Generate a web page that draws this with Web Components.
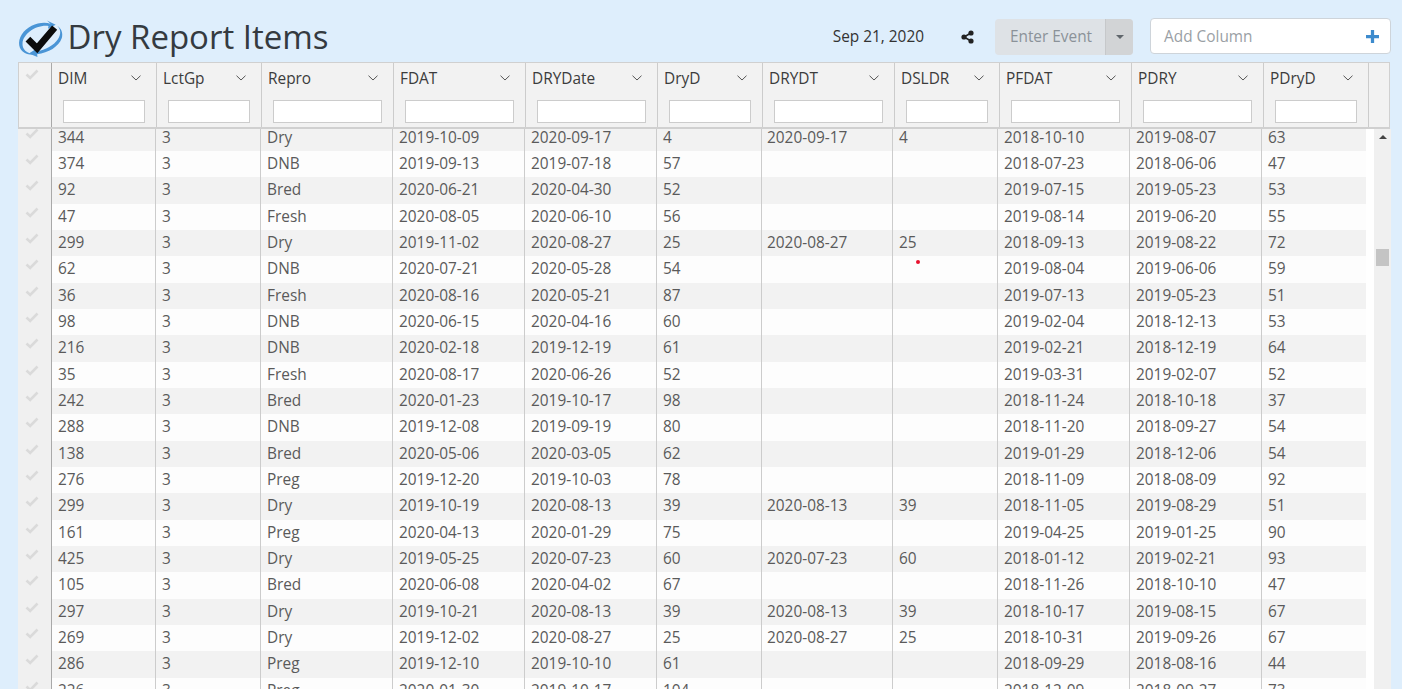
<!DOCTYPE html>
<html lang="en">
<head>
<meta charset="utf-8">
<title>Dry Report Items</title>
<style>
  html, body { margin: 0; height: 100%; overflow: hidden; }
  body { background: #deeefc; font-family: "Open Sans", "Liberation Sans", sans-serif; }
</style>
</head>
<body>
<report-page>
  <report-header slot="header"></report-header>
  <report-grid slot="grid"></report-grid>
</report-page>

<script>
const COLUMNS = [
  { name: 'DIM', head: 105, body: 104, pad: 6 },
  { name: 'LctGp', head: 105, body: 105, pad: 6 },
  { name: 'Repro', head: 132, body: 132, pad: 6 },
  { name: 'FDAT', head: 132, body: 132, pad: 6 },
  { name: 'DRYDate', head: 132, body: 132, pad: 6 },
  { name: 'DryD', head: 105, body: 105, pad: 6 },
  { name: 'DRYDT', head: 132, body: 131, pad: 5 },
  { name: 'DSLDR', head: 105, body: 105, pad: 6 },
  { name: 'PFDAT', head: 132, body: 132, pad: 6 },
  { name: 'PDRY', head: 132, body: 132, pad: 6 },
  { name: 'PDryD', head: 105, body: 104, pad: 6 }
];

const ROWS = [
  '344|3|Dry|2019-10-09|2020-09-17|4|2020-09-17|4|2018-10-10|2019-08-07|63',
  '374|3|DNB|2019-09-13|2019-07-18|57|||2018-07-23|2018-06-06|47',
  '92|3|Bred|2020-06-21|2020-04-30|52|||2019-07-15|2019-05-23|53',
  '47|3|Fresh|2020-08-05|2020-06-10|56|||2019-08-14|2019-06-20|55',
  '299|3|Dry|2019-11-02|2020-08-27|25|2020-08-27|25|2018-09-13|2019-08-22|72',
  '62|3|DNB|2020-07-21|2020-05-28|54|||2019-08-04|2019-06-06|59',
  '36|3|Fresh|2020-08-16|2020-05-21|87|||2019-07-13|2019-05-23|51',
  '98|3|DNB|2020-06-15|2020-04-16|60|||2019-02-04|2018-12-13|53',
  '216|3|DNB|2020-02-18|2019-12-19|61|||2019-02-21|2018-12-19|64',
  '35|3|Fresh|2020-08-17|2020-06-26|52|||2019-03-31|2019-02-07|52',
  '242|3|Bred|2020-01-23|2019-10-17|98|||2018-11-24|2018-10-18|37',
  '288|3|DNB|2019-12-08|2019-09-19|80|||2018-11-20|2018-09-27|54',
  '138|3|Bred|2020-05-06|2020-03-05|62|||2019-01-29|2018-12-06|54',
  '276|3|Preg|2019-12-20|2019-10-03|78|||2018-11-09|2018-08-09|92',
  '299|3|Dry|2019-10-19|2020-08-13|39|2020-08-13|39|2018-11-05|2019-08-29|51',
  '161|3|Preg|2020-04-13|2020-01-29|75|||2019-04-25|2019-01-25|90',
  '425|3|Dry|2019-05-25|2020-07-23|60|2020-07-23|60|2018-01-12|2019-02-21|93',
  '105|3|Bred|2020-06-08|2020-04-02|67|||2018-11-26|2018-10-10|47',
  '297|3|Dry|2019-10-21|2020-08-13|39|2020-08-13|39|2018-10-17|2019-08-15|67',
  '269|3|Dry|2019-12-02|2020-08-27|25|2020-08-27|25|2018-10-31|2019-09-26|67',
  '286|3|Preg|2019-12-10|2019-10-10|61|||2018-09-29|2018-08-16|44',
  '226|3|Preg|2020-01-30|2019-10-17|104|||2018-12-09|2018-09-27|73'
];

const CHECK = '<svg width="14" height="11" viewBox="0 0 14 11" style="display:block"><path d="M1.5 5.5 5.2 9 12.5 1.5" fill="none" stroke="#dadada" stroke-width="2.6"/></svg>';

class ReportPage extends HTMLElement {
  constructor() {
    super();
    this.attachShadow({ mode: 'open' });
    this.shadowRoot.innerHTML = `
      <style>
        :host { display: flex; flex-direction: column; height: 689px; padding: 0 11px 0 18px; box-sizing: border-box; overflow: hidden; }
      </style>
      <slot name="header"></slot>
      <slot name="grid"></slot>
    `;
  }
}

class ReportHeader extends HTMLElement {
  constructor() {
    super();
    this.attachShadow({ mode: 'open' });
    this.shadowRoot.innerHTML = `
      <style>
        :host { display: flex; align-items: center; height: 62px; flex: none; color: #333; }
        .logo { flex: none; margin: 14px 3.500px 0 -1px; }
        h1 { margin: 12px 0 0; font-size: 33px; font-weight: 400; line-height: 46px; color: #343a40; white-space: nowrap; }
        .date { margin: 11px 0 0 auto; font-size: 15.4px; line-height: 20px; }
        .share { margin: 11px 21px 0 37px; display: block; }
        .event { display: flex; width: 138px; height: 36px; margin-top: 11px; border-radius: 4px; overflow: hidden; background: #dee2e6; font-size: 15.4px; color: #8b9299; }
        .event span { flex: 1; text-align: center; line-height: 35px; padding-left: 2px; }
        .event i { flex: none; width: 27px; background: #d2d4d6; border-left: 1px solid #c6c8ca; display: flex; align-items: center; justify-content: center; }
        .event i::after { content: ""; border: 4px solid transparent; border-top-color: #60666c; border-bottom: 0; }
        .add { display: flex; align-items: center; width: 241px; height: 36px; margin: 10px 0 0 17px; box-sizing: border-box; background: #fff; border: 1px solid #ced4da; border-radius: 4px; padding: 0 11px 0 13px; font-size: 15.4px; color: #9a9fa5; }
        .add span { flex: 1; }
      </style>
      <svg class="logo" width="47" height="37" viewBox="1.5 1 43.500 36">
        <path d="M33 4.600C24 1.500 11 6 5 15 .5 22 2 30 8 33c3 1.400 6 1.700 9 1.300C10 33.500 5 30 5.800 23 6.800 15 18 5.500 31 6.800l-.5 2.700L38 5.500 29.500 1.500z" fill="#4a95d6"/>
        <path d="M39.500 6.500c3.500 3 4 8 .8 13-4 6-12 11-21 12l-.5-2.300-6.800 4.300 8.300 3.500-.4-2.700C31 33 41 27 44 18.500c1.500-5-.8-9.800-4.500-12z" fill="#4a95d6"/>
        <path d="M11 19.500 20 28.500 37 8.500" fill="none" stroke="#0c0c0c" stroke-width="6.500" stroke-linejoin="miter"/>
      </svg>
      <h1>Dry Report Items</h1>
      <div class="date">Sep 21, 2020</div>
      <svg class="share" width="13" height="14" viewBox="0 0 13 14">
        <path d="M3 7 10 3M3 7l7 4" stroke="#222" stroke-width="1.500" fill="none"/>
        <circle cx="3" cy="7" r="2.600" fill="#222"/><circle cx="10" cy="3" r="2.600" fill="#222"/><circle cx="10" cy="11" r="2.600" fill="#222"/>
      </svg>
      <div class="event"><span>Enter Event</span><i></i></div>
      <div class="add">
        <span>Add Column</span>
        <svg width="13" height="13" viewBox="0 0 12 12"><path d="M6 0v12M0 6h12" stroke="#3d8bcd" stroke-width="3"/></svg>
      </div>
    `;
  }
}

class GridHead extends HTMLElement {
  constructor() {
    super();
    this.attachShadow({ mode: 'open' });
    const cells = COLUMNS.map(c => `
      <div class="cell">
        <div class="title"><span>${c.name}</span>
          <svg width="10" height="6" viewBox="0 0 10 6"><path d="M.5.7 5 5 9.500.7" fill="none" stroke="#555" stroke-width="1"/></svg>
        </div>
        <input type="text" aria-label="Filter ${c.name}">
      </div>`).join('');
    this.shadowRoot.innerHTML = `
      <style>
        :host { display: grid; grid-template-columns: 33px ${COLUMNS.map(c => c.head + 'px').join(' ')} 1fr; height: 67px; flex: none; box-sizing: border-box; background: #f2f2f2; border: 1px solid #d0d0d0; border-bottom-width: 2px; margin-right: 1px; color: #3c3c3c; font-size: 15.4px; }
        .tick { border-right: 1px solid #a9a9a9; padding: 6px 0 0 6px; box-sizing: border-box; }
        .cell { border-right: 1px solid #ccc; box-sizing: border-box; padding: 0 11px 0 6px; display: flex; flex-direction: column; min-width: 0; }
        .title { display: flex; align-items: center; justify-content: space-between; height: 30px; padding-right: 4px; }
        input { display: block; box-sizing: border-box; width: auto; height: 23px; margin: 7px 0 0 5px; padding: 0; border: 1px solid #ccc; background: #fff; outline: 0; min-width: 0; }
      </style>
      <div class="tick">${CHECK}</div>${cells}<div></div>
    `;
  }
}

class GridRow extends HTMLElement {
  constructor() {
    super();
    this.attachShadow({ mode: 'open' });
  }

  connectedCallback() {
    const values = this.getAttribute('values').split('|');
    const cells = values.map((v, i) => `<div class="cell" style="padding-left:${COLUMNS[i].pad}px">${v}</div>`).join('');
    this.shadowRoot.innerHTML = `
      <style>
        :host { display: grid; grid-template-columns: 34px ${COLUMNS.map(c => c.body + 'px').join(' ')}; height: 26.35px; background: var(--row-bg, #fdfdfd); color: #5a5a5a; font-size: 15.4px; }
        .tick { background: #f0f0f0; border-right: 1px solid #a9a9a9; padding: 3px 0 0 7px; box-sizing: border-box; }
        .cell { border-right: 1px solid #ccc; box-sizing: border-box; line-height: 26px; white-space: nowrap; overflow: hidden; }
        .cell:last-child { border-right: 0; }
      </style>
      <div class="tick">${CHECK}</div>${cells}
    `;
  }
}

class GridBody extends HTMLElement {
  constructor() {
    super();
    this.attachShadow({ mode: 'open' });
    this.shadowRoot.innerHTML = `
      <style>
        :host { display: flex; flex: 1; min-height: 0; background: #fff; position: relative; }
        .rows { width: 1348px; flex: none; overflow: hidden; }
        .inner { margin-top: -4.400px; }
        ::slotted(grid-row:nth-child(odd)) { --row-bg: #f2f2f2; }
        .bar { width: 17px; margin-left: 8px; flex: none; background: #f0f0f0; }
        .arrow { width: 0; margin: 6px auto 0; border: 4px solid transparent; border-bottom: 4px solid #444; border-top: 0; }
        .thumb { height: 17px; margin: 110px 2px 0 2px; background: #c4c4c4; }
        .dot { position: absolute; left: 898px; top: 131px; width: 4px; height: 4px; border-radius: 50%; background: #e8112d; }
      </style>
      <div class="rows"><div class="inner"><slot></slot></div></div>
      <div class="bar"><div class="arrow"></div><div class="thumb"></div></div>
      <div class="dot"></div>
    `;
  }

  connectedCallback() {
    this.innerHTML = ROWS.map(r => `<grid-row values="${r}"></grid-row>`).join('');
  }
}

class ReportGrid extends HTMLElement {
  constructor() {
    super();
    this.attachShadow({ mode: 'open' });
    this.shadowRoot.innerHTML = `
      <style>
        :host { display: flex; flex-direction: column; flex: 1; min-height: 0; }
      </style>
      <grid-head></grid-head>
      <grid-body></grid-body>
    `;
  }
}

customElements.define('grid-row', GridRow);
customElements.define('grid-head', GridHead);
customElements.define('grid-body', GridBody);
customElements.define('report-grid', ReportGrid);
customElements.define('report-header', ReportHeader);
customElements.define('report-page', ReportPage);
</script>
</body>
</html>
